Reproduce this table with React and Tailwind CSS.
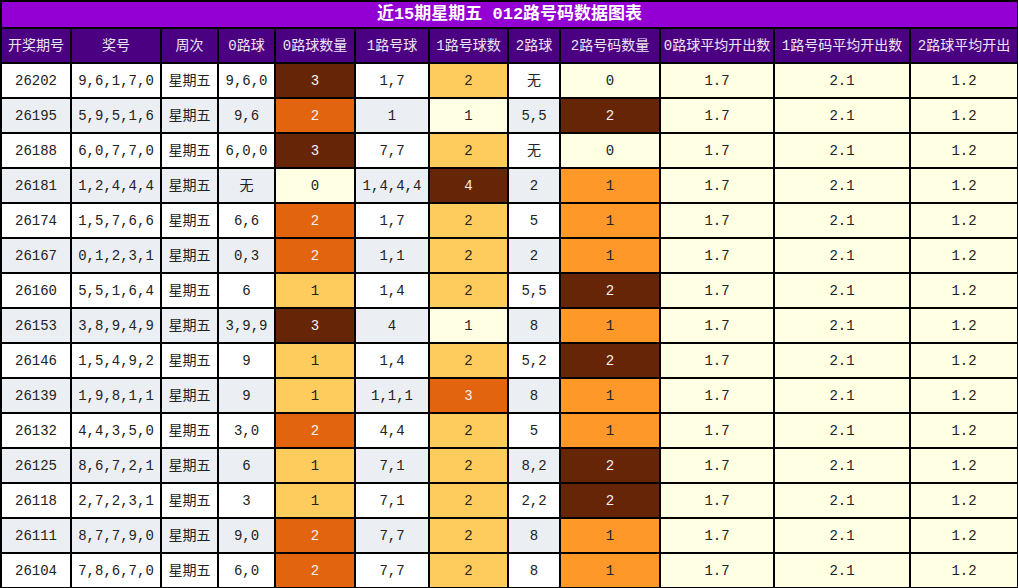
import React from 'react';

const cols = [70, 90, 57, 57, 80, 74, 79, 52, 100, 114, 136, 108];
const headers = ['开奖期号', '奖号', '周次', '0路球', '0路球数量', '1路号球', '1路号球数', '2路球', '2路号码数量', '0路球平均开出数', '1路号码平均开出数', '2路球平均开出'];

// level: p = pale, y = light orange, l = bright orange, o = deep orange, d = dark brown
const rows = [
  ['26202', '9,6,1,7,0', '9,6,0', '3', 'd', '1,7', '2', 'y', '无', '0', 'p'],
  ['26195', '5,9,5,1,6', '9,6', '2', 'o', '1', '1', 'p', '5,5', '2', 'd'],
  ['26188', '6,0,7,7,0', '6,0,0', '3', 'd', '7,7', '2', 'y', '无', '0', 'p'],
  ['26181', '1,2,4,4,4', '无', '0', 'p', '1,4,4,4', '4', 'd', '2', '1', 'l'],
  ['26174', '1,5,7,6,6', '6,6', '2', 'o', '1,7', '2', 'y', '5', '1', 'l'],
  ['26167', '0,1,2,3,1', '0,3', '2', 'o', '1,1', '2', 'y', '2', '1', 'l'],
  ['26160', '5,5,1,6,4', '6', '1', 'y', '1,4', '2', 'y', '5,5', '2', 'd'],
  ['26153', '3,8,9,4,9', '3,9,9', '3', 'd', '4', '1', 'p', '8', '1', 'l'],
  ['26146', '1,5,4,9,2', '9', '1', 'y', '1,4', '2', 'y', '5,2', '2', 'd'],
  ['26139', '1,9,8,1,1', '9', '1', 'y', '1,1,1', '3', 'o', '8', '1', 'l'],
  ['26132', '4,4,3,5,0', '3,0', '2', 'o', '4,4', '2', 'y', '5', '1', 'l'],
  ['26125', '8,6,7,2,1', '6', '1', 'y', '7,1', '2', 'y', '8,2', '2', 'd'],
  ['26118', '2,7,2,3,1', '3', '1', 'y', '7,1', '2', 'y', '2,2', '2', 'd'],
  ['26111', '8,7,7,9,0', '9,0', '2', 'o', '7,7', '2', 'y', '8', '1', 'l'],
  ['26104', '7,8,6,7,0', '6,0', '2', 'o', '7,7', '2', 'y', '8', '1', 'l'],
];

const levelCls = {
  p: 'bg-[#ffffe3] text-[#222]',
  y: 'bg-[#fecc5c] text-[#222]',
  l: 'bg-[#fe9929] text-[#222]',
  o: 'bg-[#e3640f] text-[#f2f2f2]',
  d: 'bg-[#662506] text-[#f2f2f2]',
};

const cell = 'border-2 border-black h-[35px] p-0 text-center align-middle';

export default function App() {
  return (
    <div className="w-[1018px] h-[588px] overflow-hidden bg-white" style={{ fontFamily: '"Liberation Mono", "Noto Sans CJK SC", monospace' }}>
      <table className="w-[1018px] table-fixed border-collapse text-[14px] leading-none">
        <colgroup>
          {cols.map((w, i) => (
            <col key={i} style={{ width: w }} />
          ))}
        </colgroup>
        <thead>
          <tr>
            <th colSpan={12} className="border-2 border-black h-[27px] p-0 bg-[#9400d3] text-white text-[17px] font-bold text-center">
              近15期星期五 012路号码数据图表
            </th>
          </tr>
          <tr>
            {headers.map((h) => (
              <th key={h} className="border-2 border-black h-[35px] p-0 bg-[#4b0082] text-[#ece4f4] font-normal whitespace-nowrap overflow-hidden">
                {h}
              </th>
            ))}
          </tr>
        </thead>
        <tbody>
          {rows.map((r, i) => {
            const base = i % 2 === 0 ? 'bg-white' : 'bg-[#ebeff3]';
            return (
              <tr key={r[0]} className="text-[#222]">
                <td className={`${cell} ${base}`}>{r[0]}</td>
                <td className={`${cell} ${base}`}>{r[1]}</td>
                <td className={`${cell} ${base}`}>星期五</td>
                <td className={`${cell} ${base}`}>{r[2]}</td>
                <td className={`${cell} ${levelCls[r[4]]}`}>{r[3]}</td>
                <td className={`${cell} ${base}`}>{r[5]}</td>
                <td className={`${cell} ${levelCls[r[7]]}`}>{r[6]}</td>
                <td className={`${cell} ${base}`}>{r[8]}</td>
                <td className={`${cell} ${levelCls[r[10]]}`}>{r[9]}</td>
                <td className={`${cell} bg-[#ffffe3]`}>1.7</td>
                <td className={`${cell} bg-[#ffffe3]`}>2.1</td>
                <td className={`${cell} bg-[#ffffe3]`}>1.2</td>
              </tr>
            );
          })}
        </tbody>
      </table>
    </div>
  );
}
